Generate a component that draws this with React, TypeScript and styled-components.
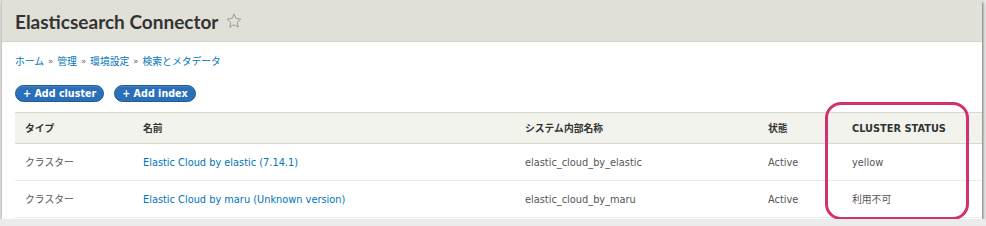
import styled, { createGlobalStyle } from "styled-components";

const GlobalStyle = createGlobalStyle`
	html, body {
		margin: 0;
		padding: 0;
		background: #ececec;
	}
	body {
		font-family: "DejaVu Sans", "Noto Sans CJK JP", sans-serif;
		color: #333;
	}
`;

const Page = styled.div`
	position: relative;
`;

const Frame = styled.div`
	width: 980px;
	height: 219px;
	margin-left: 1px;
	background: #fff;
	border-left: 1px solid #c8c8c8;
	box-shadow: 1px 2px 3px rgba(0, 0, 0, 0.55);
	overflow: hidden;
`;

const Header = styled.header`
	display: flex;
	align-items: center;
	gap: 7px;
	height: 40px;
	padding: 1px 13px 0;
	background: #e0e0d8;
	border-bottom: 1px solid #d4d4cc;
`;

const Title = styled.h1`
	margin: 0;
	font-family: Lato, "DejaVu Sans", sans-serif;
	font-size: 19px;
	font-weight: bold;
	color: #333;
`;

const Content = styled.main`
	padding: 12px 0 0 13px;
`;

const Breadcrumb = styled.nav`
	display: flex;
	align-items: center;
	gap: 4px;
	font-size: 9.8px;
	color: #0074bd;
`;

const Sep = styled.span`
	color: #666;
	font-size: 8.5px;
`;

const Actions = styled.div`
	display: flex;
	gap: 10px;
	margin-top: 17px;
`;

const ActionButton = styled.button`
	height: 17px;
	padding: 0 7px;
	border: 1px solid #1e5c9c;
	border-radius: 9px;
	background: #2a6fb8;
	color: #fff;
	font-family: inherit;
	font-size: 9.6px;
	font-weight: bold;
	line-height: 15px;
	box-shadow: inset 0 1px 0 rgba(255, 255, 255, 0.15);
`;

const Table = styled.table`
	width: 100%;
	margin-top: 10px;
	border-collapse: collapse;
	font-size: 9.8px;
`;

const Th = styled.th`
	height: 30px;
	padding: 0 10px;
	text-align: left;
	font-weight: bold;
	color: #333;
	background: #f3f3ee;
	border-top: 1px solid #d9d9d0;
	border-bottom: 1px solid #d9d9d0;
`;

const Td = styled.td`
	height: 36px;
	padding: 0 10px;
	color: #555;
	border-bottom: 1px solid #ebebe6;
`;

const NameLink = styled.a`
	color: #0074bd;
	text-decoration: none;
`;

const Highlight = styled.div`
	position: absolute;
	left: 825px;
	top: 102px;
	width: 138px;
	height: 112px;
	border: 3px solid #d2306f;
	border-radius: 16px;
	pointer-events: none;
`;

const Star = () => (
	<svg width="18" height="18" viewBox="0 0 24 24" fill="none" stroke="#9a9a94" strokeWidth="1.3" strokeLinejoin="round">
		<path d="M12 2.8l2.75 5.9 6.45.75-4.8 4.4 1.3 6.35L12 17l-5.7 3.2 1.3-6.35-4.8-4.4 6.45-.75z" />
	</svg>
);

const rows = [
	{ type: "クラスター", name: "Elastic Cloud by elastic (7.14.1)", machine: "elastic_cloud_by_elastic", state: "Active", status: "yellow" },
	{ type: "クラスター", name: "Elastic Cloud by maru (Unknown version)", machine: "elastic_cloud_by_maru", state: "Active", status: "利用不可" },
];

const App = () => {
	return (
		<>
			<GlobalStyle />
			<Page>
				<Frame>
					<Header>
						<Title>Elasticsearch Connector</Title>
						<Star />
					</Header>
					<Content>
						<Breadcrumb>
							<span>ホーム</span>
							<Sep>»</Sep>
							<span>管理</span>
							<Sep>»</Sep>
							<span>環境設定</span>
							<Sep>»</Sep>
							<span>検索とメタデータ</span>
						</Breadcrumb>
						<Actions>
							<ActionButton>+ Add cluster</ActionButton>
							<ActionButton>+ Add index</ActionButton>
						</Actions>
						<Table>
							<colgroup>
								<col style={{ width: 118 }} />
								<col style={{ width: 382 }} />
								<col style={{ width: 243 }} />
								<col style={{ width: 84 }} />
								<col />
							</colgroup>
							<thead>
								<tr>
									<Th>タイプ</Th>
									<Th>名前</Th>
									<Th>システム内部名称</Th>
									<Th>状態</Th>
									<Th>CLUSTER STATUS</Th>
								</tr>
							</thead>
							<tbody>
								{rows.map((r) => (
									<tr key={r.machine}>
										<Td>{r.type}</Td>
										<Td>
											<NameLink href="#">{r.name}</NameLink>
										</Td>
										<Td>{r.machine}</Td>
										<Td>{r.state}</Td>
										<Td>{r.status}</Td>
									</tr>
								))}
							</tbody>
						</Table>
					</Content>
				</Frame>
				<Highlight />
			</Page>
		</>
	);
};

export default App;
